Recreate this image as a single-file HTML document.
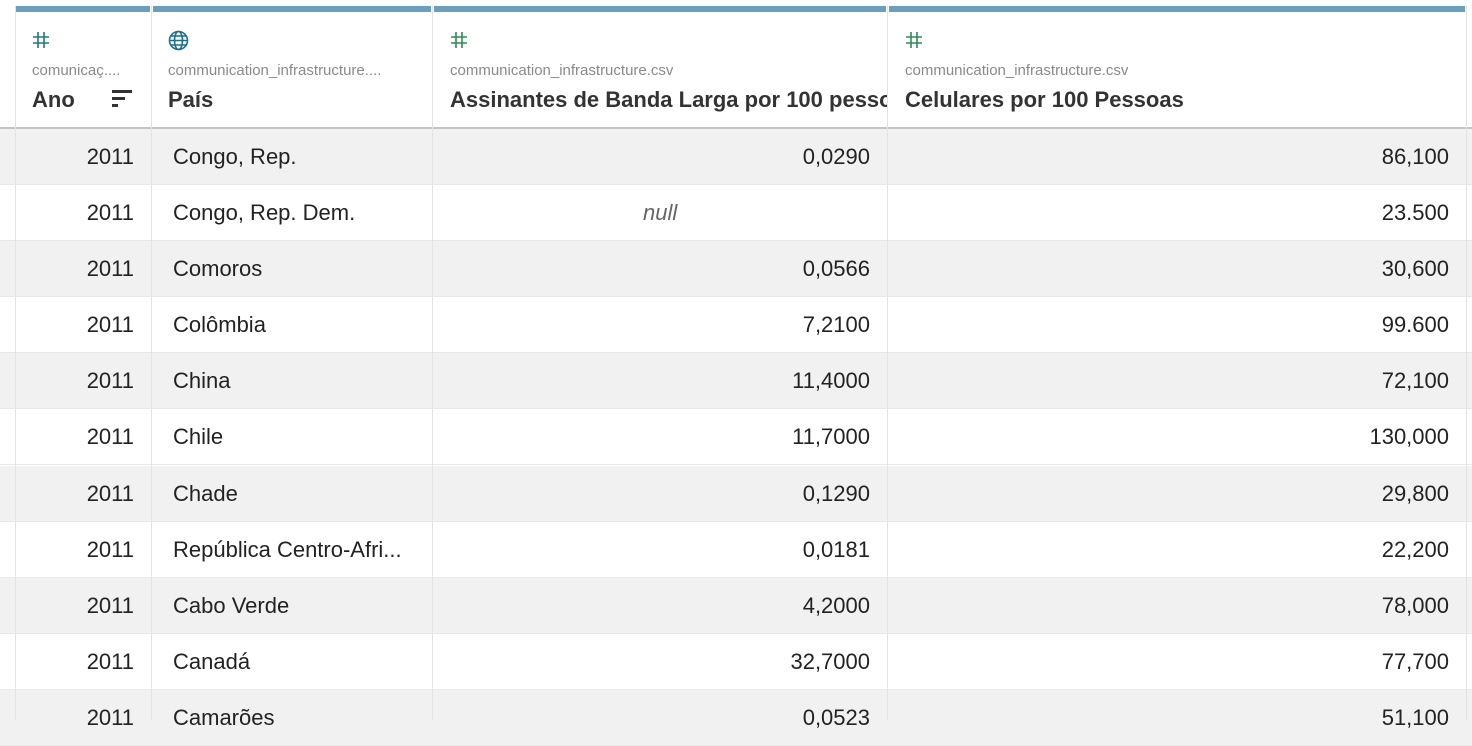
<!DOCTYPE html>
<html><head><meta charset="utf-8"><style>
*{margin:0;padding:0;box-sizing:border-box}
body{width:1472px;height:720px;overflow:hidden;background:#fff;font-family:"Liberation Sans",sans-serif;position:relative}
.abs{position:absolute}
.vl{position:absolute;top:6px;bottom:0;width:1px;background:#e3e3e3}
.bar{position:absolute;top:6px;height:6px;background:#6b9fbe}
.src{position:absolute;top:62px;font-size:15px;color:#8a8a8a;white-space:nowrap;overflow:hidden}
.ttl{position:absolute;top:87px;font-size:22px;font-weight:bold;color:#333;white-space:nowrap;overflow:hidden}
.row{position:absolute;left:0;width:1472px;height:56px;border-bottom:1px solid #e8e8e8}
.row.s{background:#f1f1f1}
.c{position:absolute;top:15px;font-size:22px;color:#222;white-space:nowrap}
.r{text-align:right}
</style></head><body>
<div class="bar" style="left:16px;width:134px"></div>
<div class="bar" style="left:153px;width:278px"></div>
<div class="bar" style="left:434px;width:452px"></div>
<div class="bar" style="left:889px;width:576px"></div>

<svg class="abs" style="left:32px;top:31px" width="18" height="18" viewBox="0 0 18 18" stroke="#1f7a7a" stroke-width="1.6" fill="none"><path d="M6 1v16M12 1v16M1 6h16M1 12h16"/></svg>
<svg class="abs" style="left:168px;top:30px" width="21" height="21" viewBox="0 0 21 21" stroke="#1f6f8a" stroke-width="1.6" fill="none"><circle cx="10.5" cy="10.5" r="9"/><ellipse cx="10.5" cy="10.5" rx="4" ry="9"/><path d="M1.5 10.5h18M3 6h15M3 15h15"/></svg>
<svg class="abs" style="left:450px;top:31px" width="18" height="18" viewBox="0 0 18 18" stroke="#2e8b57" stroke-width="1.6" fill="none"><path d="M6 1v16M12 1v16M1 6h16M1 12h16"/></svg>
<svg class="abs" style="left:905px;top:31px" width="18" height="18" viewBox="0 0 18 18" stroke="#2e8b57" stroke-width="1.6" fill="none"><path d="M6 1v16M12 1v16M1 6h16M1 12h16"/></svg>

<div class="src" style="left:32px;width:106px">comunicaç....</div>
<div class="src" style="left:168px;width:258px">communication_infrastructure....</div>
<div class="src" style="left:450px">communication_infrastructure.csv</div>
<div class="src" style="left:905px">communication_infrastructure.csv</div>
<div class="ttl" style="left:32px">Ano</div>
<svg class="abs" style="left:112px;top:90px" width="20" height="18" viewBox="0 0 20 18" fill="#333"><rect x="0" y="0" width="20" height="3"/><rect x="0" y="7" width="13" height="3"/><rect x="0" y="14" width="6" height="3"/></svg>
<div class="ttl" style="left:168px">País</div>
<div class="ttl" style="left:450px;width:437px">Assinantes de Banda Larga por 100 pessoas</div>
<div class="ttl" style="left:905px">Celulares por 100 Pessoas</div>
<div class="abs" style="left:0;top:127px;width:1472px;height:2px;background:#c4c4c4"></div>

<div class="row s" style="top:129px"><div class="c r" style="right:1338px">2011</div><div class="c" style="left:173px">Congo, Rep.</div><div class="c r" style="right:602px">0,0290</div><div class="c r" style="right:23px">86,100</div></div>
<div class="row" style="top:185px"><div class="c r" style="right:1338px">2011</div><div class="c" style="left:173px">Congo, Rep. Dem.</div><div class="c" style="left:643px;font-style:italic;color:#666">null</div><div class="c r" style="right:23px">23.500</div></div>
<div class="row s" style="top:241px"><div class="c r" style="right:1338px">2011</div><div class="c" style="left:173px">Comoros</div><div class="c r" style="right:602px">0,0566</div><div class="c r" style="right:23px">30,600</div></div>
<div class="row" style="top:297px"><div class="c r" style="right:1338px">2011</div><div class="c" style="left:173px">Colômbia</div><div class="c r" style="right:602px">7,2100</div><div class="c r" style="right:23px">99.600</div></div>
<div class="row s" style="top:353px"><div class="c r" style="right:1338px">2011</div><div class="c" style="left:173px">China</div><div class="c r" style="right:602px">11,4000</div><div class="c r" style="right:23px">72,100</div></div>
<div class="row" style="top:409px"><div class="c r" style="right:1338px">2011</div><div class="c" style="left:173px">Chile</div><div class="c r" style="right:602px">11,7000</div><div class="c r" style="right:23px">130,000</div></div>
<div class="row s" style="top:466px"><div class="c r" style="right:1338px">2011</div><div class="c" style="left:173px">Chade</div><div class="c r" style="right:602px">0,1290</div><div class="c r" style="right:23px">29,800</div></div>
<div class="row" style="top:522px"><div class="c r" style="right:1338px">2011</div><div class="c" style="left:173px">República Centro-Afri...</div><div class="c r" style="right:602px">0,0181</div><div class="c r" style="right:23px">22,200</div></div>
<div class="row s" style="top:578px"><div class="c r" style="right:1338px">2011</div><div class="c" style="left:173px">Cabo Verde</div><div class="c r" style="right:602px">4,2000</div><div class="c r" style="right:23px">78,000</div></div>
<div class="row" style="top:634px"><div class="c r" style="right:1338px">2011</div><div class="c" style="left:173px">Canadá</div><div class="c r" style="right:602px">32,7000</div><div class="c r" style="right:23px">77,700</div></div>
<div class="row s" style="top:690px"><div class="c r" style="right:1338px">2011</div><div class="c" style="left:173px">Camarões</div><div class="c r" style="right:602px">0,0523</div><div class="c r" style="right:23px">51,100</div></div>

<div class="vl" style="left:15px"></div>
<div class="vl" style="left:151px"></div>
<div class="vl" style="left:432px"></div>
<div class="vl" style="left:887px"></div>
<div class="vl" style="left:1466px"></div>
</body></html>
